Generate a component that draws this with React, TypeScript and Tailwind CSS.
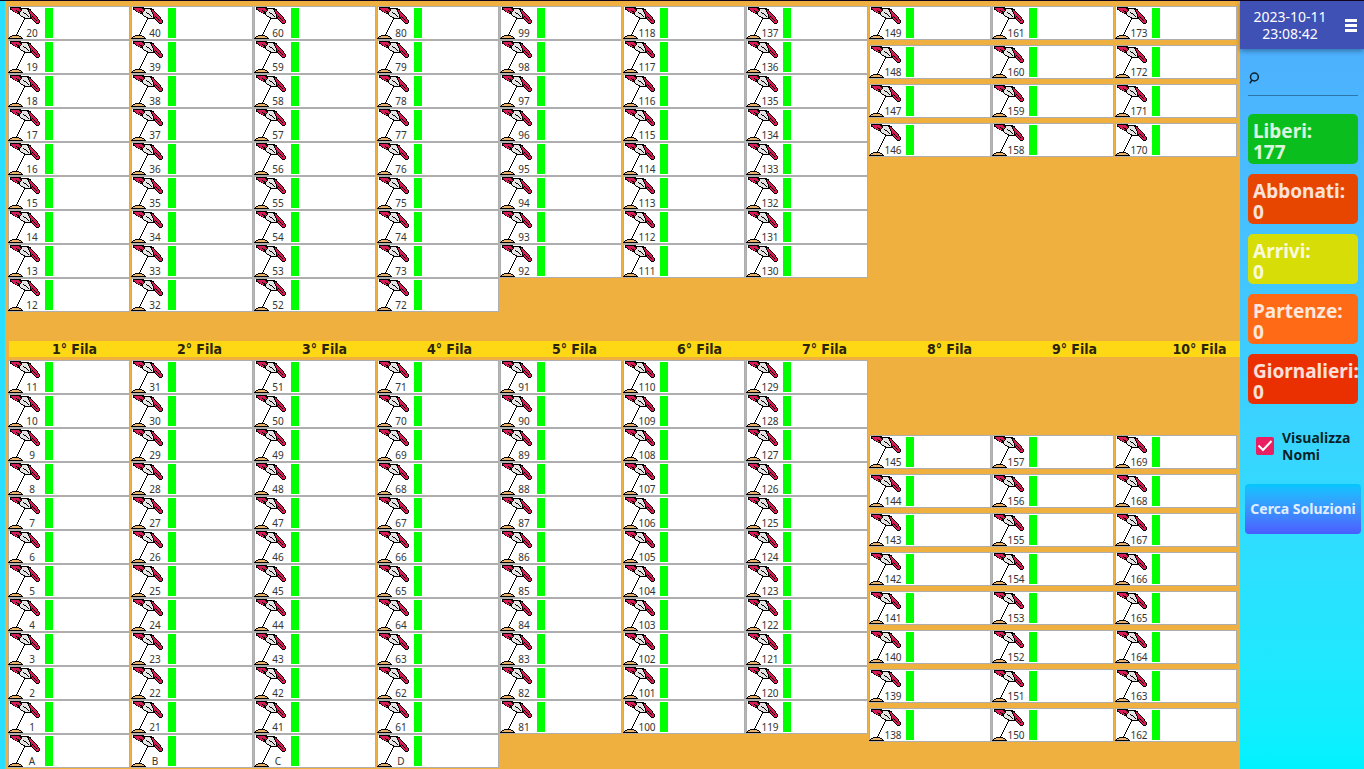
import { useState } from "react";

type Column = { places: string[]; spaced?: boolean };

const range = (from: number, to: number, ...extra: string[]): string[] => [
  ...Array.from({ length: from - to + 1 }, (_, i) => String(from - i)),
  ...extra,
];

const upper: Column[] = [
  { places: range(20, 12) },
  { places: range(40, 32) },
  { places: range(60, 52) },
  { places: range(80, 72) },
  { places: range(99, 92) },
  { places: range(118, 111) },
  { places: range(137, 130) },
  { places: range(149, 146), spaced: true },
  { places: range(161, 158), spaced: true },
  { places: range(173, 170), spaced: true },
];

const lower: Column[] = [
  { places: range(11, 1, "A") },
  { places: range(31, 21, "B") },
  { places: range(51, 41, "C") },
  { places: range(71, 61, "D") },
  { places: range(91, 81) },
  { places: range(110, 100) },
  { places: range(129, 119) },
  { places: range(145, 138), spaced: true },
  { places: range(157, 150), spaced: true },
  { places: range(169, 162), spaced: true },
];

const stats = [
  { label: "Liberi:", value: 177, color: "bg-[#0abf1d]" },
  { label: "Abbonati:", value: 0, color: "bg-[#e64600]" },
  { label: "Arrivi:", value: 0, color: "bg-[#d7dd06]" },
  { label: "Partenze:", value: 0, color: "bg-[#ff6a17]" },
  { label: "Giornalieri:", value: 0, color: "bg-[#ea3000]" },
];

// Pixel sprite: K outline, R red cloth, W white cloth, T sand.
const sprite = [
  "  KKKKKKKKKKK",
  "  KRRRRRRRRKKKKKKKKKK",
  "  KKRRRRRRRRKKWWWWWKKKK",
  "    KRRRKRRRRKWWWWWWKRK",
  "     KRRRKKRKWWWWWWWKRRK",
  "       KRRKKWWWKWWWWWKRRK",
  "         KKKWWWWKKWWWKRRRK",
  "           KWWWWWWKWWWKRRRK",
  "            KWWWWWWKWWKRRRRK",
  "             KKWWWWWKWKRKRRRK",
  "               KKWWWWWKKRKRRRK",
  "                KKKKKKKKRRKRRK",
  "                K       KRRKRRK",
  "               K         KRRKRRK",
  "               K          KRRRRK",
  "              K            KRRRK",
  "              K             KKK",
  "             K",
  "             K",
  "            K",
  "            K",
  "           K",
  "           K",
  "          K",
  "          K",
  "         K",
  "         K",
  "        K",
  "    KKKKKKK",
  "  KKTTTTTTTKK",
  " KTTTTTTTTTTTK",
  "KKKKKKKKKKKKKKK",
];

const pixels = (key: string) =>
  sprite
    .flatMap((row, y) => [...row].map((cell, x) => (cell === key ? `M${x} ${y}h1v1h-1z` : "")))
    .join("");

const layers = [
  { fill: "#000", d: pixels("K") },
  { fill: "#d81b56", d: pixels("R") },
  { fill: "#e4e4e4", d: pixels("W") },
  { fill: "#e8b26a", d: pixels("T") },
];

function Umbrella() {
  return (
    <svg viewBox="0 0 32 32" className="h-8 w-8 shrink-0" shapeRendering="crispEdges" aria-hidden="true">
      {layers.map((layer) => (
        <path key={layer.fill} d={layer.d} fill={layer.fill} />
      ))}
    </svg>
  );
}

function Place({ name }: { name: string }) {
  return (
    <button type="button" className="relative flex h-[34px] w-full items-start border border-[#aeaeae] bg-white">
      <span className="-ml-px flex">
        <Umbrella />
      </span>
      <span className="absolute bottom-0 left-[13px] w-5 text-center text-[10px] leading-3 text-[#333]">{name}</span>
      <span className="mt-px ml-[5px] h-[30px] w-2 bg-[#00ff00]" />
    </button>
  );
}

function Sector({ columns, offset }: { columns: Column[]; offset?: boolean }) {
  return (
    <div className="grid grid-cols-10 items-start gap-x-px px-[3px]">
      {columns.map((column) => (
        <div
          key={column.places[0]}
          className={`flex flex-col ${column.spaced ? "gap-[5px]" : ""} ${column.spaced && offset ? "pt-[75px]" : ""}`}
        >
          {column.places.map((name) => (
            <Place key={name} name={name} />
          ))}
        </div>
      ))}
    </div>
  );
}

function Sidebar() {
  const [showNames, setShowNames] = useState(true);
  return (
    <aside className="flex w-[124px] shrink-0 flex-col bg-linear-to-b from-[#4facfe] to-[#00f2fe]">
      <header className="flex h-12 items-center bg-[#3f51b5] pl-2 text-white shadow-[0_2px_5px_rgba(0,0,0,0.35)]">
        <time className="w-[84px] text-center text-sm leading-[17px]">2023-10-11 23:08:42</time>
        <button type="button" aria-label="Menu" className="ml-[13px] flex w-3 flex-col gap-0.5">
          <span className="h-[3px] bg-white" />
          <span className="h-[3px] bg-white" />
          <span className="h-[3px] bg-white" />
        </button>
      </header>

      <label className="mx-2 mt-3 mr-1.5 flex h-[35px] items-center border-b border-[#2c75a8] pl-px">
        <svg viewBox="0 0 10 12" className="h-3 w-2.5 shrink-0" fill="none" stroke="#10202c" strokeWidth="1.5" aria-hidden="true">
          <circle cx="5.4" cy="5" r="3.9" />
          <path d="M3 8L.8 11.4" />
        </svg>
        <input type="text" aria-label="Cerca" className="min-w-0 flex-1 bg-transparent px-1 text-sm outline-none" />
      </label>

      <div className="mt-[18px] mr-1.5 ml-2 flex flex-col gap-2.5">
        {stats.map((s) => (
          <button
            key={s.label}
            type="button"
            className={`h-[50px] rounded-[5px] pt-1.5 pl-[5px] text-left text-[19px] leading-[21px] font-bold whitespace-nowrap text-white/85 ${s.color}`}
          >
            {s.label}
            <br />
            {s.value}
          </button>
        ))}
      </div>

      <label className="mt-[25px] ml-4 flex items-center gap-2 text-sm leading-[17px] font-bold text-black/85">
        <span className="grid">
          <input
            type="checkbox"
            checked={showNames}
            onChange={(e) => setShowNames(e.target.checked)}
            className="col-start-1 row-start-1 size-[18px] appearance-none rounded-xs bg-white checked:bg-[#e91e63]"
          />
          <svg
            viewBox="0 0 18 18"
            className="pointer-events-none col-start-1 row-start-1 size-[18px]"
            fill="none"
            stroke="#fff"
            strokeWidth="2"
            aria-hidden="true"
          >
            {showNames && <path d="M2.5 8.5L7 13L15.5 4" />}
          </svg>
        </span>
        <span>
          Visualizza
          <br />
          Nomi
        </span>
      </label>

      <button
        type="button"
        className="mt-[21px] mr-[3px] ml-[5px] h-[50px] rounded bg-linear-to-b from-[#00c6ff] to-[#4b5bff] text-sm font-bold whitespace-nowrap text-white/85"
      >
        Cerca Soluzioni
      </button>
    </aside>
  );
}

export default function App() {
  return (
    <div className="flex min-h-screen border-t border-[#12061f] bg-[#29dfff] font-['Noto_Sans',sans-serif]">
      <main className="ml-[5px] min-w-0 flex-1 overflow-hidden bg-[#efb03f] pt-[5px]">
        <Sector columns={upper} />
        <div className="mt-[29px] mb-[3px] ml-1 bg-[#ffd815]">
          <div className="-mr-[22px] ml-[3px] grid grid-cols-10 text-center font-['DejaVu_Sans_Condensed','DejaVu_Sans',sans-serif] text-sm leading-4 font-bold text-[#2b2408]">
            {upper.map((column, i) => (
              <span key={column.places[0]}>{i + 1}° Fila</span>
            ))}
          </div>
        </div>
        <Sector columns={lower} offset />
      </main>
      <Sidebar />
    </div>
  );
}
